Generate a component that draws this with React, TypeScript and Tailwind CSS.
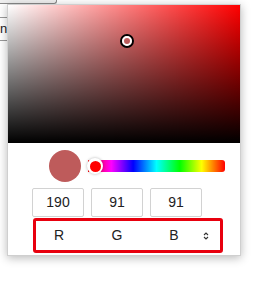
import React from "react";

export default function App() {
  const font = { fontFamily: '"Liberation Sans", Arial, sans-serif' };
  return (
    <div className="relative w-[263px] h-[281px] bg-white overflow-hidden" style={font}>
      {/* background page content */}
      <div className="h-[4px] w-[57px] bg-[#efefef] border-b border-r border-[#8a8a8a] rounded-br-[3px]" />
      <div className="mt-[13px] h-[24px] w-[40px] border-y border-[#9a9a9a] text-[13px] leading-[22px] text-[#222]">
        nl
      </div>

      {/* popup */}
      <div className="absolute left-[7px] top-[4px] w-[234px] h-[252px] border border-[#cfcfcf] bg-white shadow-[0_2px_9px_rgba(0,0,0,0.28)]">
        <div
          className="relative h-[138px] w-full"
          style={{
            background:
              "linear-gradient(to top, #000, rgba(0,0,0,0)), linear-gradient(to right, #fff, rgba(255,255,255,0)), #f00",
          }}
        >
          <div className="absolute left-[112px] top-[29px] w-[14px] h-[14px] rounded-full border-2 border-black">
            <div className="w-full h-full rounded-full border-2 border-white" />
          </div>
        </div>

        <div className="mt-[7px] ml-[41px] flex items-center">
          <div className="w-[32px] h-[32px] rounded-full bg-[#be5b5b]" />
          <div
            className="relative ml-[7px] w-[137px] h-[12px] rounded-r-[3px]"
            style={{
              background:
                "linear-gradient(to right, #f00 0%, #f0f 17%, #00f 33%, #0ff 50%, #0f0 67%, #ff0 83%, #f00 100%)",
            }}
          >
            <div className="absolute left-[-1px] top-[-2px] w-[16px] h-[16px] rounded-full bg-white shadow-[0_0_3px_rgba(0,0,0,0.3)] flex items-center justify-center">
              <div className="w-[11px] h-[11px] rounded-full bg-[#ff0000]" />
            </div>
          </div>
        </div>

        <div className="mt-[6px] ml-[24px] flex gap-[7px]">
          {["190", "91", "91"].map((v, i) => (
            <div
              key={i}
              className="w-[52px] h-[29px] border border-[#d2d2d2] rounded-[2px] flex items-center justify-center text-[14px] text-[#222]"
            >
              {v}
            </div>
          ))}
        </div>

        <div className="mt-[1px] ml-[25px] w-[190px] h-[35px] border-[3px] border-[#e8000e] rounded-[3px] flex items-center text-[14px] text-[#222]">
          <div className="grid grid-cols-[46px_70px_44px]">
            <span className="text-center">R</span>
            <span className="text-center">G</span>
            <span className="text-center">B</span>
          </div>
          <svg className="ml-[7px]" width="6" height="10" viewBox="0 0 6 10" fill="none" stroke="#333" strokeWidth="1.1">
            <path d="M1 4 L3 2 L5 4" />
            <path d="M1 6 L3 8 L5 6" />
          </svg>
        </div>
      </div>
    </div>
  );
}
